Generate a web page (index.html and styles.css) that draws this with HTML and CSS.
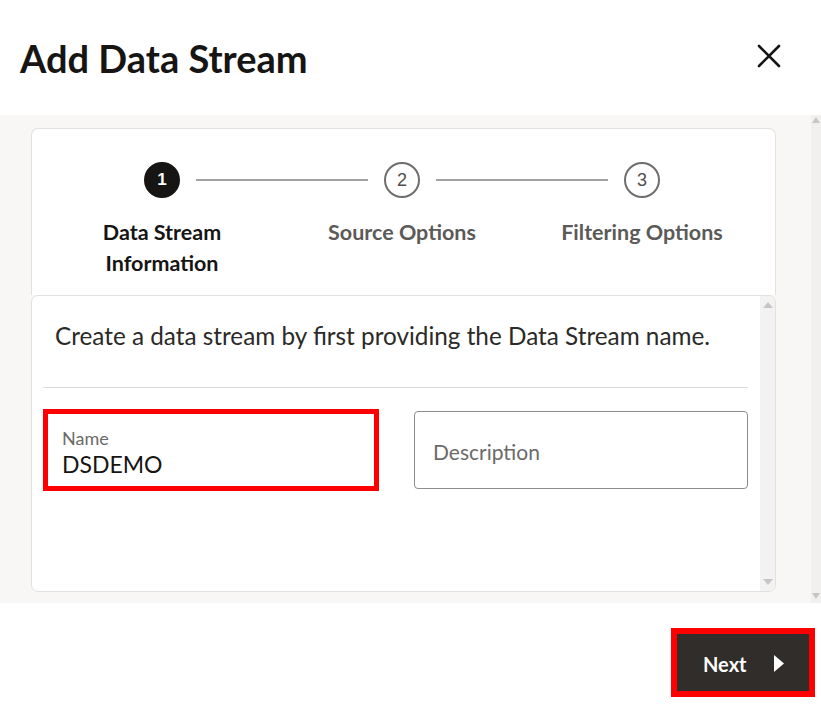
FILE: index.html
```html
<!DOCTYPE html>
<html lang="en">
<head>
<meta charset="utf-8">
<title>Add Data Stream</title>
<link rel="stylesheet" href="styles.css">
</head>
<body>
<div class="dialog">
  <header class="head">
    <h1 class="title">Add Data Stream</h1>
    <button class="close" aria-label="Close">
      <svg width="24" height="24" viewBox="0 0 24 24"><path d="M2 2 L22 22 M22 2 L2 22" stroke="#161513" stroke-width="2.6" stroke-linecap="round" fill="none"/></svg>
    </button>
  </header>
  <div class="band">
    <div class="band-body">
      <div class="stepper">
        <div class="track">
          <span class="dot active">1</span>
          <span class="line"></span>
          <span class="dot">2</span>
          <span class="line"></span>
          <span class="dot">3</span>
        </div>
        <div class="labels">
          <span class="label active">Data Stream Information</span>
          <span class="label">Source Options</span>
          <span class="label">Filtering Options</span>
        </div>
      </div>
      <div class="panel">
        <div class="panel-main">
          <p class="intro">Create a data stream by first providing the Data Stream name.</p>
          <div class="rule"></div>
          <div class="fields">
            <div class="field name-field">
              <span class="field-label">Name</span>
              <span class="field-value">DSDEMO</span>
            </div>
            <div class="field desc-field">
              <span class="placeholder">Description</span>
            </div>
          </div>
        </div>
        <div class="scroll inner">
          <span class="arrow up"></span>
          <span class="arrow down"></span>
        </div>
      </div>
    </div>
    <div class="scroll outer">
      <span class="arrow up"></span>
      <span class="arrow down"></span>
    </div>
  </div>
  <footer class="foot">
    <button class="next">
      <span>Next</span>
      <svg width="10" height="17" viewBox="0 0 10 17"><path d="M0 0 L10 8.5 L0 17 Z" fill="#ffffff"/></svg>
    </button>
  </footer>
</div>
</body>
</html>
```
FILE: styles.css
```css
* { box-sizing: border-box; }
html, body { margin: 0; padding: 0; background: #ffffff; }
body { font-family: Lato, "Noto Sans", sans-serif; color: #161513; }
.dialog { width: 821px; height: 716px; display: flex; flex-direction: column; }

.head { height: 115px; flex: 0 0 115px; display: flex; align-items: flex-start; justify-content: space-between; padding: 35px 40px 0 20px; }
.title { margin: 0; font-size: 38px; font-weight: 700; line-height: 46px; color: #161513; }
.close { border: 0; background: none; padding: 0; margin-top: 9px; width: 24px; height: 24px; display: block; }
.close svg { display: block; }

.band { flex: 0 0 488px; height: 488px; background: #f8f7f5; display: flex; }
.band-body { flex: 1; padding: 13px 35px 11px 31px; display: flex; flex-direction: column; }

.stepper { height: 167px; flex: 0 0 167px; background: #ffffff; border: 1px solid #e2e1df; border-bottom: 0; border-radius: 7px 7px 0 0; }
.track { display: flex; align-items: center; padding: 33px 0 0 112px; height: 69px; }
.dot { width: 36px; height: 36px; flex: 0 0 36px; border-radius: 50%; border: 2px solid #6f6e6c; display: flex; align-items: center; justify-content: center; font-size: 18px; color: #4f4e4c; font-family: "Liberation Sans", sans-serif; }
.dot.active { background: #161513; border-color: #161513; color: #ffffff; font-weight: 700; font-size: 17px; }
.line { flex: 0 0 172px; height: 2px; background: #a3a2a0; margin: 0 16px; }
.labels { display: grid; grid-template-columns: 240px 240px 240px; padding: 19px 0 0 10px; }
.label { justify-self: center; text-align: center; max-width: 180px; font-size: 21.5px; font-weight: 700; line-height: 31px; color: #5b5a58; }
.label.active { color: #161513; }

.panel { flex: 1; background: #ffffff; border: 1px solid #e2e1df; border-radius: 7px; display: flex; }
.panel-main { flex: 1; padding: 0 12px 0 11px; }
.intro { margin: 25px 0 0 12px; font-size: 24.3px; line-height: 30px; color: #2b2a28; }
.rule { height: 1px; background: #dddcda; margin-top: 36px; }
.fields { display: flex; align-items: center; gap: 35px; margin-top: 21px; }
.field { display: flex; flex-direction: column; }
.name-field { width: 336px; height: 82px; border: 5px solid #ff0000; padding: 13px 0 0 14px; }
.field-label { font-size: 18px; line-height: 22px; color: #6b6a68; }
.field-value { font-size: 23px; line-height: 28px; margin-top: 1px; color: #161513; }
.desc-field { width: 334px; height: 78px; border: 1px solid #8d8c8a; border-radius: 4px; padding: 0 0 0 18px; justify-content: center; }
.placeholder { font-size: 21px; line-height: 26px; color: #6b6a68; margin-top: 4px; }

.scroll { display: flex; flex-direction: column; justify-content: space-between; align-items: center; }
.scroll.inner { flex: 0 0 15px; background: #f2f2f2; padding: 6px 0 6px; border-radius: 0 6px 6px 0; }
.scroll.outer { flex: 0 0 10px; background: #f1f0ef; padding: 2px 0 4px; }
.arrow { width: 0; height: 0; border-left: 5px solid transparent; border-right: 5px solid transparent; }
.arrow.up { border-bottom: 6px solid #c6c6c6; }
.arrow.down { border-top: 6px solid #c6c6c6; }
.scroll.outer .arrow { border-left-width: 4px; border-right-width: 4px; }

.foot { flex: 1; display: flex; justify-content: flex-end; align-items: flex-start; padding: 25px 6px 0 0; }
.next { width: 144px; height: 69px; border: 6px solid #ff0000; background: #312d2a; color: #ffffff; display: flex; align-items: center; justify-content: space-between; padding: 3px 25px 0 26px; font-family: Lato, "Noto Sans", sans-serif; font-size: 20px; font-weight: 700; }
.next svg { display: block; margin-top: -1px; }
```
